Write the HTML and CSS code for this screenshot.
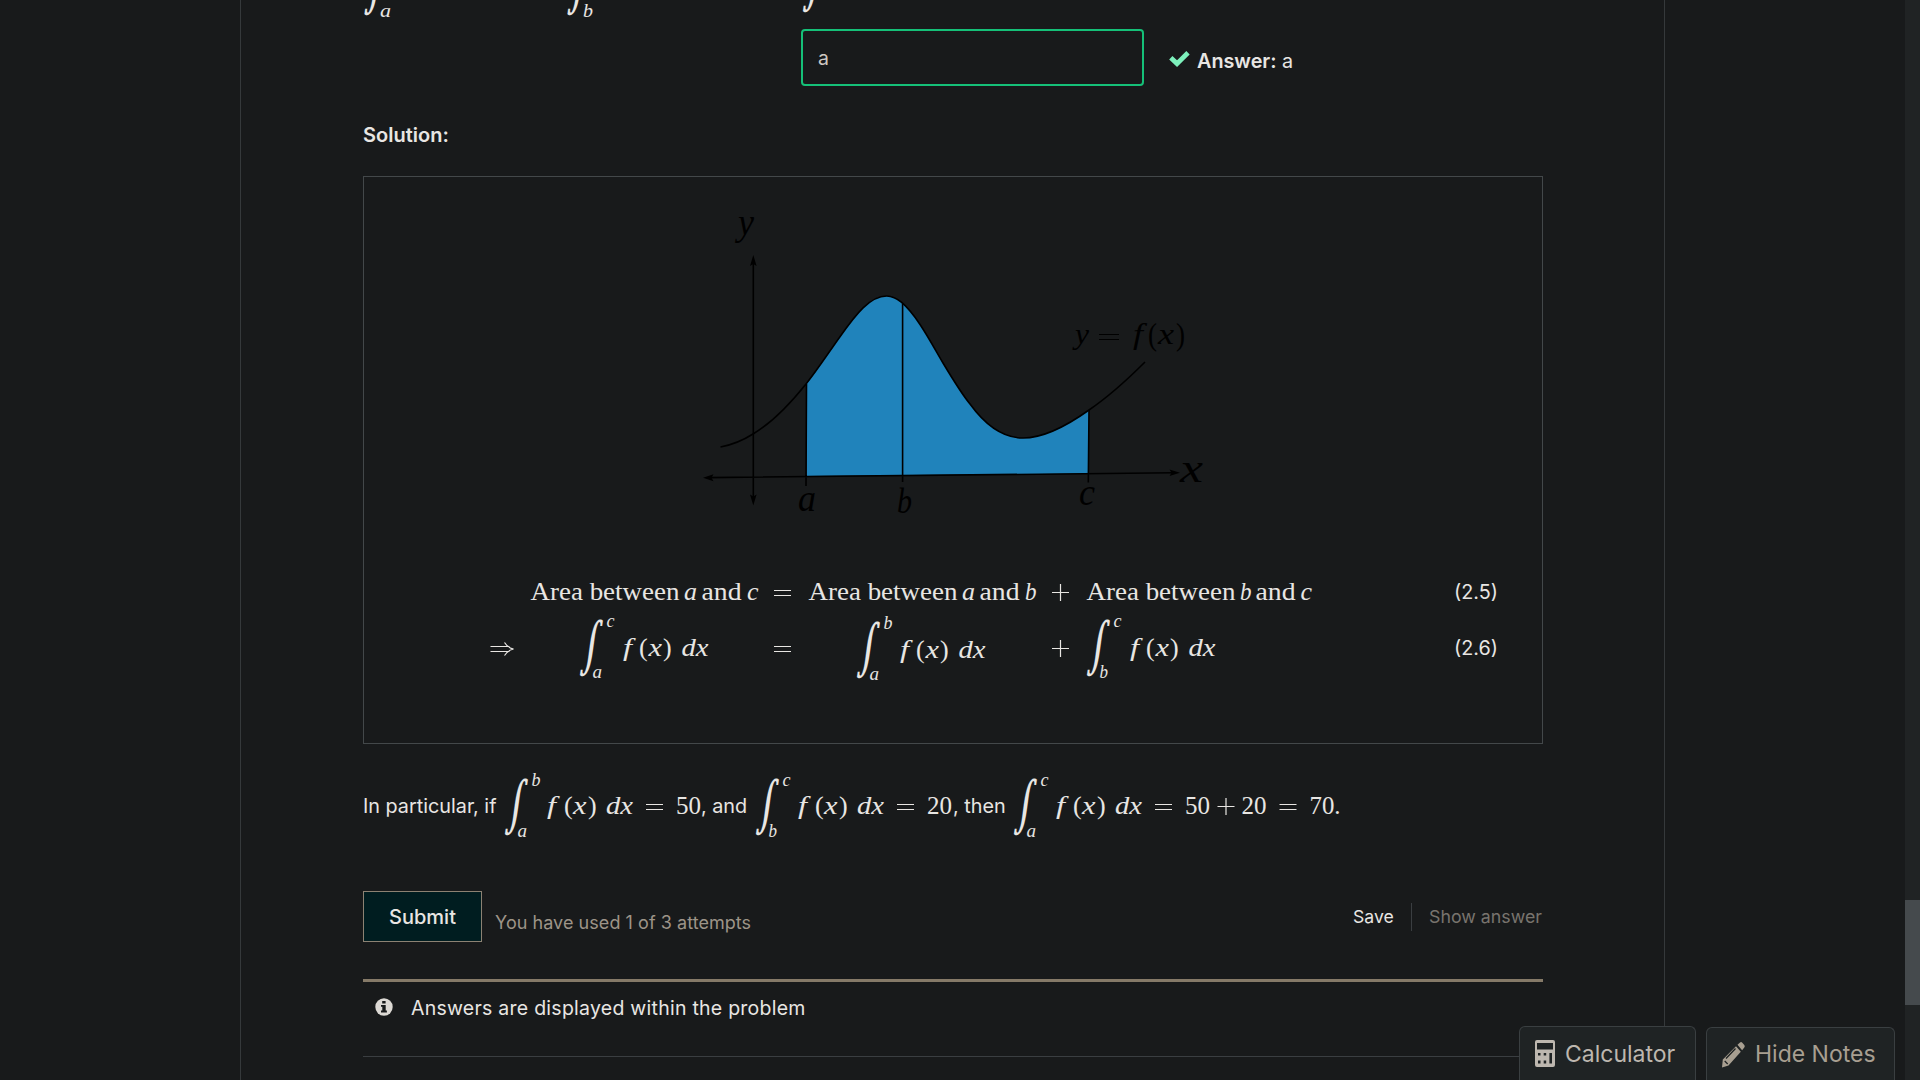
FILE: index.html
```html
<!DOCTYPE html>
<html lang="en">
<head>
<meta charset="utf-8">
<title>Integration problem</title>
<link rel="stylesheet" href="styles.css">
</head>
<body>
<main class="page">
  <section class="problem">
    <div class="top-row">
      <svg class="top-math" viewBox="0 0 600 25">
        <text class="int" transform="translate(0.500 0.500) skewX(-8) scale(.7 1.030)">∫</text>
        <text class="it sub" x="17" y="17" textLength="11" lengthAdjust="spacingAndGlyphs">a</text>
        <text class="int" transform="translate(203.500 0.500) skewX(-8) scale(.7 1.030)">∫</text>
        <text class="it sub" x="220" y="17" textLength="10" lengthAdjust="spacingAndGlyphs">b</text>
        <text class="int" transform="translate(439 -2.500) skewX(-8) scale(.7 1.030)">∫</text>
      </svg>
    </div>
    <div class="answer-row">
      <input class="answer" value="a" aria-label="Answer">
      <svg class="check" viewBox="0 0 21 16"><path d="M1.800 6.800 8 12.600 19 1.800" fill="none" stroke="#7df0bc" stroke-width="4.800"/></svg>
      <span class="answer-text"><b>Answer:</b> a</span>
    </div>
    <h3 class="solution">Solution:</h3>
    <div class="box">
      <svg class="graph" viewBox="690 200 530 330">
        <path fill="#2083bb" d="M806.500 476V384C818 369 829 352 840 336.700C856 314 870 296 886.700 296C892 296 897 298.500 902 302.700C917 316 929 339 943 363C952 378 961 393 970 404C986 426 1003 438 1023 438C1045 438 1068 425 1089 410L1088 473.500Z"/>
        <g class="lines">
          <path d="M720.500 447C731 445 742 441 753 434C770 424 790 404 806 384C818 369 829 352 840 336.700C856 314 870 296 886.700 296C892 296 897 298.500 902 302.700C917 316 929 339 943 363C952 378 961 393 970 404C986 426 1003 438 1023 438C1045 438 1068 425 1089 410C1108 397 1127 380 1145 362"/>
          <path d="M753.300 260V500M708 477.600 1174 472.800M806.500 384 806 486M902.600 303V482M1089 410 1088.300 482.500"/>
        </g>
        <path d="M753.300 255l3.300 11-3.300-2-3.300 2zM753.300 505.500l3.300-11-3.300 2-3.300-2zM703 477.700l10.500-3.500-2 3.500 2 3.500zM1180 472.700l-10.500-3.300 2 3.300-2 3.400z"/>
        <g class="it">
          <text x="738" y="234" font-size="38" textLength="16" lengthAdjust="spacingAndGlyphs" dy="1">y</text>
          <text x="798" y="511" textLength="18" lengthAdjust="spacingAndGlyphs" font-size="38">a</text>
          <text x="897" y="512.500" textLength="15" lengthAdjust="spacingAndGlyphs" font-size="35">b</text>
          <text x="1079" y="505" textLength="16" lengthAdjust="spacingAndGlyphs" font-size="38">c</text>
          <text x="1180" y="481.500" textLength="23" lengthAdjust="spacingAndGlyphs" font-size="43">x</text>
          <text x="1075" y="344" textLength="14" lengthAdjust="spacingAndGlyphs" font-size="29">y</text>
          <text x="1133" y="344" textLength="10" lengthAdjust="spacingAndGlyphs" font-size="29">f</text>
          <text x="1158" y="344" textLength="16" lengthAdjust="spacingAndGlyphs" font-size="29">x</text>
        </g>
        <g class="rm">
          <path d="M1099 334.500h20M1099 339.500h20" stroke="#000" stroke-width="1.200"/>
          <text x="1148" y="344.500" font-size="32" textLength="9" lengthAdjust="spacingAndGlyphs">(</text>
          <text x="1176" y="344.500" font-size="32" textLength="9" lengthAdjust="spacingAndGlyphs">)</text>
        </g>
      </svg>
      <div class="equations">
        <span></span>
        <svg class="phrase" viewBox="0 0 232 34"><text class="rm" x="0.500" y="24.500" textLength="149" lengthAdjust="spacingAndGlyphs">Area between</text><text class="it" x="154" y="24.500" textLength="13" lengthAdjust="spacingAndGlyphs">a</text><text class="rm" x="171.500" y="24.500" textLength="40" lengthAdjust="spacingAndGlyphs">and</text><text class="it" x="217" y="24.500" textLength="11.500" lengthAdjust="spacingAndGlyphs">c</text></svg>
        <svg class="op" viewBox="0 0 20 34"><path class="rule" d="M1 15.500h17M1 20.500h17"/></svg>
        <svg class="phrase" viewBox="0 0 232 34"><text class="rm" x="0.500" y="24.500" textLength="149" lengthAdjust="spacingAndGlyphs">Area between</text><text class="it" x="154" y="24.500" textLength="13" lengthAdjust="spacingAndGlyphs">a</text><text class="rm" x="171.500" y="24.500" textLength="40" lengthAdjust="spacingAndGlyphs">and</text><text class="it" x="217" y="24.500" textLength="11.500" lengthAdjust="spacingAndGlyphs">b</text></svg>
        <svg class="op" viewBox="0 0 20 34"><path class="rule" d="M1 17.500h17M9.500 9v17"/></svg>
        <svg class="phrase" viewBox="0 0 232 34"><text class="rm" x="0.500" y="24.500" textLength="149" lengthAdjust="spacingAndGlyphs">Area between</text><text class="it" x="154" y="24.500" textLength="11.500" lengthAdjust="spacingAndGlyphs">b</text><text class="rm" x="169.500" y="24.500" textLength="40" lengthAdjust="spacingAndGlyphs">and</text><text class="it" x="214.500" y="24.500" textLength="11.500" lengthAdjust="spacingAndGlyphs">c</text></svg>
        <span class="num">(2.5)</span>

        <svg class="arrow" viewBox="0 0 24 64"><path class="rule" d="M.500 28.500h19M.500 33.500h19M14.500 24.500q3 5 9 6.500q-6 1.500-9 6.500"/></svg>
        <svg class="integral first" viewBox="0 0 132 64"><text class="int" transform="translate(0 44) skewX(-8) scale(.7 1.030)">∫</text><text class="it sub" x="27.500" y="9" textLength="8" lengthAdjust="spacingAndGlyphs">c</text><text class="it sub" x="13.500" y="59.500" textLength="9.500" lengthAdjust="spacingAndGlyphs">a</text><text class="it" x="44" y="37.500" textLength="9" lengthAdjust="spacingAndGlyphs">f</text><text class="rm paren" x="60" y="38">(</text><text class="it" x="69.500" y="37.500" textLength="13.500" lengthAdjust="spacingAndGlyphs">x</text><text class="rm paren" x="84" y="38">)</text><text class="it" x="102.500" y="37.500" textLength="27" lengthAdjust="spacingAndGlyphs">dx</text></svg>
        <svg class="op" viewBox="0 0 20 64"><path class="rule" d="M1 28.500h17M1 33.500h17"/></svg>
        <svg class="integral second" viewBox="0 0 132 64"><text class="int" transform="translate(0 44) skewX(-8) scale(.7 1.030)">∫</text><text class="it sub" x="27.500" y="9" textLength="9" lengthAdjust="spacingAndGlyphs">b</text><text class="it sub" x="13.500" y="60" textLength="9.500" lengthAdjust="spacingAndGlyphs">a</text><text class="it" x="44" y="37.500" textLength="9" lengthAdjust="spacingAndGlyphs">f</text><text class="rm paren" x="60" y="38">(</text><text class="it" x="69.500" y="37.500" textLength="13.500" lengthAdjust="spacingAndGlyphs">x</text><text class="rm paren" x="84" y="38">)</text><text class="it" x="102.500" y="37.500" textLength="27" lengthAdjust="spacingAndGlyphs">dx</text></svg>
        <svg class="op" viewBox="0 0 20 64"><path class="rule" d="M1 30.500h17M9.500 22v17"/></svg>
        <svg class="integral" viewBox="0 0 132 64"><text class="int" transform="translate(0 44) skewX(-8) scale(.7 1.030)">∫</text><text class="it sub" x="27.500" y="9" textLength="8" lengthAdjust="spacingAndGlyphs">c</text><text class="it sub" x="13.500" y="59.500" textLength="8.500" lengthAdjust="spacingAndGlyphs">b</text><text class="it" x="44" y="37.500" textLength="9" lengthAdjust="spacingAndGlyphs">f</text><text class="rm paren" x="60" y="38">(</text><text class="it" x="69.500" y="37.500" textLength="13.500" lengthAdjust="spacingAndGlyphs">x</text><text class="rm paren" x="84" y="38">)</text><text class="it" x="102.500" y="37.500" textLength="27" lengthAdjust="spacingAndGlyphs">dx</text></svg>
        <span class="num num-two">(2.6)</span>
      </div>
    </div>

    <div class="particular">
      <span class="words w-if">In particular, if</span>
      <svg class="inline-math" width="197" height="66"><text class="int" transform="translate(0 44) skewX(-8) scale(.7 1.030)">∫</text><text class="it sub" x="27.500" y="9" textLength="9" lengthAdjust="spacingAndGlyphs">b</text><text class="it sub" x="13.500" y="59.500" textLength="9.500" lengthAdjust="spacingAndGlyphs">a</text><text class="it" x="43" y="36.500" textLength="9" lengthAdjust="spacingAndGlyphs">f</text><text class="rm paren" x="60" y="37">(</text><text class="it" x="69" y="36.500" textLength="13.500" lengthAdjust="spacingAndGlyphs">x</text><text class="rm paren" x="84" y="37">)</text><text class="it" x="102" y="36.500" textLength="27" lengthAdjust="spacingAndGlyphs">dx</text><path class="rule" d="M142 27.500h17M142 32.500h17"/><text class="rm" x="172" y="36.500" textLength="25" lengthAdjust="spacingAndGlyphs">50</text></svg>
      <span class="words w-and">, and</span>
      <svg class="inline-math" width="198" height="66"><text class="int" transform="translate(0 44) skewX(-8) scale(.7 1.030)">∫</text><text class="it sub" x="27.500" y="9" textLength="8" lengthAdjust="spacingAndGlyphs">c</text><text class="it sub" x="13.500" y="59.500" textLength="8.500" lengthAdjust="spacingAndGlyphs">b</text><text class="it" x="43" y="36.500" textLength="9" lengthAdjust="spacingAndGlyphs">f</text><text class="rm paren" x="60" y="37">(</text><text class="it" x="69" y="36.500" textLength="13.500" lengthAdjust="spacingAndGlyphs">x</text><text class="rm paren" x="84" y="37">)</text><text class="it" x="102" y="36.500" textLength="27" lengthAdjust="spacingAndGlyphs">dx</text><path class="rule" d="M142 27.500h17M142 32.500h17"/><text class="rm" x="172" y="36.500" textLength="25" lengthAdjust="spacingAndGlyphs">20</text></svg>
      <span class="words w-then">, then</span>
      <svg class="inline-math" width="330" height="66"><text class="int" transform="translate(0 44) skewX(-8) scale(.7 1.030)">∫</text><text class="it sub" x="27.500" y="9" textLength="8" lengthAdjust="spacingAndGlyphs">c</text><text class="it sub" x="13.500" y="59.500" textLength="9.500" lengthAdjust="spacingAndGlyphs">a</text><text class="it" x="43" y="36.500" textLength="9" lengthAdjust="spacingAndGlyphs">f</text><text class="rm paren" x="60" y="37">(</text><text class="it" x="69" y="36.500" textLength="13.500" lengthAdjust="spacingAndGlyphs">x</text><text class="rm paren" x="84" y="37">)</text><text class="it" x="102" y="36.500" textLength="27" lengthAdjust="spacingAndGlyphs">dx</text><path class="rule" d="M142 27.500h17M142 32.500h17M204.500 29.500h17M213 21v17M266.500 27.500h17M266.500 32.500h17"/><text class="rm" x="172" y="36.500" textLength="25" lengthAdjust="spacingAndGlyphs">50</text><text class="rm" x="228.500" y="36.500" textLength="25" lengthAdjust="spacingAndGlyphs">20</text><text class="rm" x="296.500" y="36.500" textLength="31" lengthAdjust="spacingAndGlyphs">70.</text></svg>
    </div>

    <div class="actions">
      <button class="submit">Submit</button>
      <span class="attempts">You have used 1 of 3 attempts</span>
      <span class="save">Save</span>
      <span class="show">Show answer</span>
    </div>
    <div class="notice">
      <svg class="info" viewBox="0 0 18 18"><circle cx="9" cy="9" r="8.700" fill="#dcd9d4"/><path fill="#181a1b" d="M7.200 2.900h3.400v2.500H7.200zM6 6.900h4.700v5.600h1.200v1.900H6v-1.900h1.300V8.700H6z"/></svg>
      <span>Answers are displayed within the problem</span>
    </div>
  </section>
</main>
<div class="tools">
  <div class="tool calculator">
    <svg width="20" height="27" viewBox="0 0 20 27"><path fill="#bdb7af" fill-rule="evenodd" d="M2 0h16q2 0 2 2v23q0 2-2 2H2q-2 0-2-2V2q0-2 2-2zM2 3v6.500h16V3zM3 13v2.500h2.500V13zM8.700 13v2.500h2.500V13zM14.400 13v10.500H17V13zM3 20.500V23.500h2.500v-3zM8.700 20.500v3h2.500v-3z"/></svg>
    <span>Calculator</span>
  </div>
  <div class="tool notes">
    <svg width="23" height="27" viewBox="0 0 23 27"><path fill="#a89f91" d="M15.500 3.800 18 1.500q1.200-1 2.300.2l2 2.300q1 1.200 0 2.500l-2.200 2.800zM14 5.200l4.800 5.500L6.500 24.500 0 26.500l.8-8z"/><path d="M4 17.500 13.500 7.500M2.700 20l3 3" stroke="#1f2324" stroke-width="1.300"/></svg>
    <span>Hide Notes</span>
  </div>
</div>
<div class="scrollbar"><div class="thumb"></div></div>
</body>
</html>
```
FILE: styles.css
```css
* { box-sizing: border-box; }
body {
  margin: 0;
  width: 1920px;
  height: 1080px;
  overflow: hidden;
  background: #181a1b;
  color: #e8e6e3;
  font: 19.8px/28px Inter, sans-serif;
}
svg { display: block; overflow: visible; flex: none; }
.page {
  width: 1425px;
  height: 1080px;
  margin-left: 240px;
  padding: 0 121px 0 122px;
  border-left: 1px solid #35393b;
  border-right: 1px solid #35393b;
}
.problem { width: 1180px; }
.top-row { height: 29px; overflow: hidden; }
.top-math { width: 600px; height: 25px; }
.it { font-family: "Liberation Serif", serif; font-style: italic; font-size: 24.5px; }
.rm { font-family: "Liberation Serif", serif; font-size: 24.5px; }
.paren { font-size: 26px; }
.sub { font-size: 18px; }
.int { font-family: "DejaVu Math TeX Gyre", "DejaVu Serif", serif; font-size: 50px; }
.equations text, .inline-math text, .top-math text { fill: #e8e6e3; }
.rule { fill: none; stroke: #e8e6e3; stroke-width: 1.2; }
.answer-row { display: flex; align-items: center; height: 57px; padding-left: 438px; }
.answer {
  width: 343px;
  height: 57px;
  padding: 1px 15px 0;
  border: 2px solid #15c078;
  border-radius: 4px;
  background: #181a1b;
  color: #cdc8c2;
  font: 19.5px Inter, sans-serif;
}
.check { width: 21px; height: 16px; margin: 3px 0 0 25px; }
.answer-text { margin: 6px 0 0 7px; white-space: nowrap; }
.answer-text b { font-weight: 600; }
.solution { margin: 35px 0 27px; font-size: 20px; line-height: 28px; font-weight: 600; }
.box { height: 568px; border: 1px solid #43484a; padding-top: 23px; }
.graph { width: 530px; height: 330px; margin-left: 326px; }
.graph .lines { fill: none; stroke: #000; stroke-width: 1.6; }
.graph .it text { font-family: "Liberation Serif", serif; }
.equations {
  display: grid;
  grid-template-columns: 40px 243px 35px 243px 35px 368px 50px;
  grid-template-rows: 43px 64px;
  margin: 45px 0 0 126px;
}
.phrase { width: 232px; height: 34px; }
.op { width: 20px; }
.arrow { width: 24px; height: 64px; }
.integral { width: 132px; height: 64px; }
.first { margin-left: 49px; }
.second { margin: 2px 0 0 48px; }
.num { font-size: 19.8px; line-height: 35px; white-space: nowrap; }
.num-two { line-height: 61px; }
.particular { display: flex; height: 66px; margin-top: 33px; }
.words { white-space: nowrap; line-height: 59px; }
.w-if { width: 141px; }
.w-and { width: 54px; }
.w-then { width: 60px; }
.actions { display: flex; height: 51px; margin-top: 48px; }
.submit {
  width: 119px;
  height: 51px;
  padding: 0;
  border: 1px solid #8c8273;
  background: #001d20;
  color: #e8e6e3;
  font: 500 20px Inter, sans-serif;
}
.attempts { margin: 18px 0 0 13px; width: 858px; font-size: 18px; letter-spacing: .05px; color: #9d9488; }
.save { width: 59px; height: 28px; margin-top: 12px; font-size: 17.6px; border-right: 1px solid #3a3e41; }
.show { margin: 12px 0 0 17px; font-size: 17.8px; color: #78746e; white-space: nowrap; }
.notice {
  display: flex;
  align-items: flex-start;
  height: 78px;
  margin-top: 37px;
  padding: 12px 0 0 12px;
  gap: 18px;
  border-top: 3px solid #857a68;
  border-bottom: 1px solid #3a3e41;
  font-size: 19.5px;
  letter-spacing: .25px;
}
.info { width: 18px; height: 18px; margin-top: 4px; }
.tools { position: absolute; left: 1519px; bottom: 0; display: flex; align-items: flex-end; gap: 10px; }
.tool {
  display: flex;
  align-items: center;
  height: 54px;
  padding: 0 15px;
  border: 1px solid #3a3f41;
  border-bottom: 0;
  border-radius: 6px 6px 0 0;
  background: #1f2324;
  color: #bdb7af;
  font-size: 23px;
  gap: 10px;
  white-space: nowrap;
}
.calculator { width: 177px; }
.notes { width: 189px; height: 53px; color: #a89f91; }
.scrollbar { position: absolute; left: 1905px; top: 0; width: 15px; height: 1080px; padding-top: 900px; background: #202324; }
.thumb { height: 105px; background: #454a4d; }
```
